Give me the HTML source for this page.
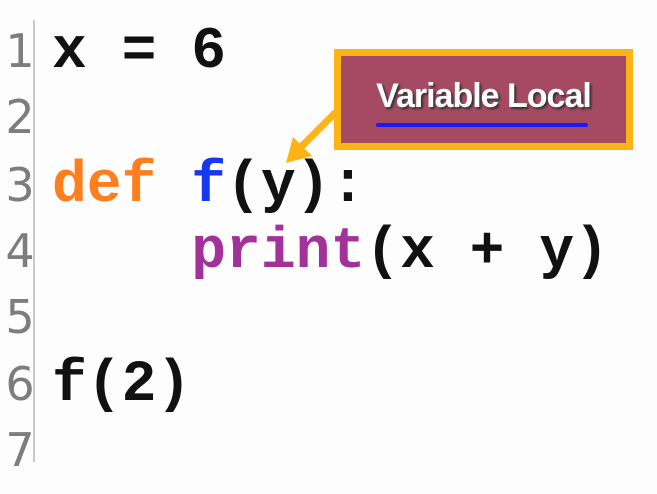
<!DOCTYPE html>
<html><head><style>
html,body{margin:0;padding:0;}
body{width:657px;height:494px;background:#fdfdfd;position:relative;overflow:hidden;}
.ln{position:absolute;left:5px;font-family:"DejaVu Sans",sans-serif;font-size:46px;color:#7d7d7d;width:30px;text-align:center;line-height:1;}
.code{position:absolute;left:52px;font-family:"Liberation Mono",monospace;font-weight:bold;font-size:58px;line-height:1;white-space:pre;color:#111;}
.gut{position:absolute;left:33px;top:20px;width:2px;height:442px;background:#c8c8c8;}
.box{position:absolute;left:334px;top:49px;width:285px;height:87px;border:7px solid #fbb316;background:#a64a63;}
.lbl{position:absolute;left:334px;width:299px;top:77px;text-align:center;font-family:"Liberation Sans",sans-serif;font-weight:bold;font-size:34px;color:#fff;text-shadow:2px 2px 2px #333;letter-spacing:-1px;}
.ul{position:absolute;left:376px;top:123px;width:212px;height:4px;border-radius:2px;background:#1a1aff;}
</style></head><body>
<div class="gut"></div>
<div class="ln" style="top:28px">1</div>
<div class="ln" style="top:94px">2</div>
<div class="ln" style="top:162px">3</div>
<div class="ln" style="top:228px">4</div>
<div class="ln" style="top:294px">5</div>
<div class="ln" style="top:361px">6</div>
<div class="ln" style="top:427px">7</div>
<div class="code" style="top:24px">x = 6</div>
<div class="code" style="top:158px"><span style="color:#ff7f1e">def</span> <span style="color:#1638ee">f</span>(y):</div>
<div class="code" style="top:224px">    <span style="color:#a2329a">print</span>(x + y)</div>
<div class="code" style="top:357px">f(2)</div>
<div class="box"></div>
<div class="lbl">Variable Local</div>
<div class="ul"></div>
<svg style="position:absolute;left:0;top:0" width="657" height="494">
<line x1="336" y1="112" x2="300" y2="148" stroke="#fbb316" stroke-width="7"/>
<polygon points="286,163 293,137 312,156" fill="#fbb316"/>
</svg>
</body></html>
